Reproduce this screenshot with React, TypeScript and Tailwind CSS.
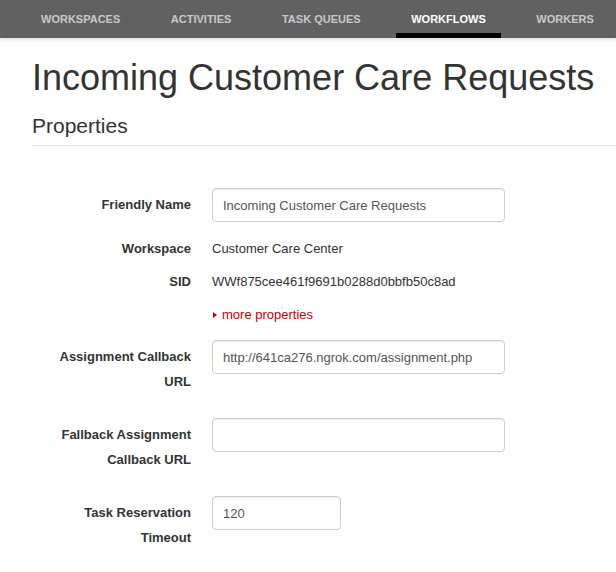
import React from "react";

const navItems = ["WORKSPACES", "ACTIVITIES", "TASK QUEUES", "WORKFLOWS", "WORKERS"];
const active = "WORKFLOWS";

function NavBar() {
  return (
    <nav className="h-[38px] bg-[#616161] flex items-stretch pl-[26px] gap-[20.6px] shadow-[0_2px_4px_rgba(0,0,0,0.12)] relative">
      {navItems.map(item => (
        <a
          key={item}
          href="#"
          className={
            item === active
              ? "relative px-[15px] flex items-center text-[11px] font-bold text-white whitespace-nowrap"
              : "relative px-[15px] flex items-center text-[11px] font-bold text-[#c6c9cc] whitespace-nowrap"
          }
        >
          {item}
          {item === active && <span className="absolute left-0 right-0 bottom-0 h-[5px] bg-black" />}
        </a>
      ))}
    </nav>
  );
}

function InputRow({
  label,
  value,
  wide = true,
  className = "",
}: {
  label: string;
  value: string;
  wide?: boolean;
  className?: string;
}) {
  return (
    <div className={"flex items-start gap-[21px] " + className}>
      <label className="w-[159px] shrink-0 text-right font-bold text-[13px] leading-[25px] pt-[4px] pl-[9px] text-[#333]">
        {label}
      </label>
      <input
        type="text"
        defaultValue={value}
        className={
          (wide ? "w-[293px]" : "w-[129px]") +
          " h-[34px] border border-[#ccc] rounded-[4px] px-[10px] text-[13px] text-[#555] bg-white shadow-[inset_0_1px_1px_rgba(0,0,0,0.075)] outline-none"
        }
      />
    </div>
  );
}

function StaticRow({ label, children }: { label: string; children: React.ReactNode }) {
  return (
    <div className="flex items-center gap-[21px] h-[33px]">
      <div className="w-[159px] shrink-0 text-right font-bold text-[13px] leading-[25px] text-[#333]">{label}</div>
      <div className="text-[13px] leading-[25px] text-[#333]">{children}</div>
    </div>
  );
}

export default function App() {
  return (
    <div className="min-h-[572px] bg-white font-['Liberation_Sans',Arial,sans-serif]">
      <NavBar />
      <div className="pl-[32px]">
        <h1 className="pt-[22px] text-[36px] leading-[36px] text-[#333] whitespace-nowrap">
          Incoming Customer Care Requests
        </h1>
        <h2 className="mt-[19px] text-[21px] leading-[21px] text-[#333] pb-[9px] border-b border-[#e5e5e5]">
          Properties
        </h2>

        <form className="mt-[42px]">
          <InputRow label="Friendly Name" value="Incoming Customer Care Requests" className="mb-[10px]" />
          <StaticRow label="Workspace">Customer Care Center</StaticRow>
          <StaticRow label="SID">WWf875cee461f9691b0288d0bbfb50c8ad</StaticRow>
          <StaticRow label="">
            <a href="#" className="flex items-center text-[#cc0000]">
              <span className="inline-block w-0 h-0 border-y-[3px] border-y-transparent border-l-[4px] border-l-[#cc0000] ml-[1px] mr-[5px]" />
              more properties
            </a>
          </StaticRow>
          <InputRow
            label="Assignment Callback URL"
            value="http://641ca276.ngrok.com/assignment.php"
            className="mt-[9px] mb-[24px]"
          />
          <InputRow label="Fallback Assignment Callback URL" value="" className="mb-[24px]" />
          <InputRow label="Task Reservation Timeout" value="120" wide={false} />
        </form>
      </div>
    </div>
  );
}
